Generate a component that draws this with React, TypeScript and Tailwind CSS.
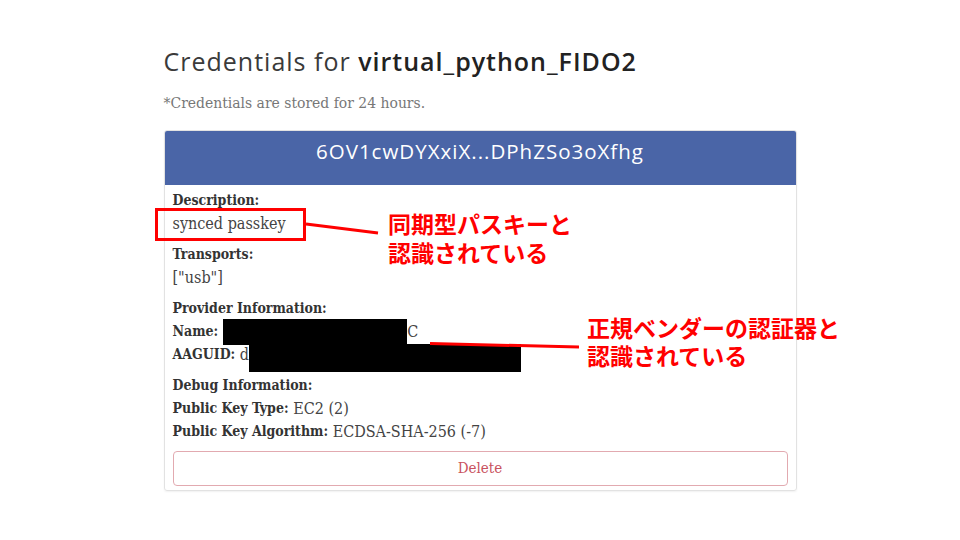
const label = "font-bold text-[#333] font-['DejaVu_Serif_Condensed','DejaVu_Serif',serif] text-[14px]";
const value = "text-[#444] font-['DejaVu_Serif_Condensed','DejaVu_Serif',serif] text-[16px]";

function Row({ k, v }: { k: string; v: string }) {
  return (
    <div className="h-[23px] flex items-center whitespace-nowrap">
      <span className={label}>{k}</span>
      <span className={value}>&nbsp;{v}</span>
    </div>
  );
}

export default function App() {
  return (
    <div className="relative w-[960px] h-[540px] bg-white overflow-hidden">
      <div className="mx-auto w-[633px] pt-[44px]">
        <h1 className="text-[25px] leading-[34px] tracking-[1px] text-[#3a3a3a] font-['Open_Sans','Lato',sans-serif] whitespace-nowrap">
          Credentials for <span className="font-semibold text-[#222]">virtual_python_FIDO2</span>
        </h1>
        <p className="mt-[15px] leading-[20px] text-[15.5px] text-[#777] font-['DejaVu_Serif_Condensed','DejaVu_Serif',serif]">
          *Credentials are stored for 24 hours.
        </p>
        <div className="mt-[17px] border border-[#e2e2e2] rounded-[3px] overflow-hidden shadow-[0_1px_2px_rgba(0,0,0,0.06)]">
          <div className="h-[54px] bg-[#4a65a7] flex justify-center pt-[5px]">
            <span className="text-white text-[20.5px] leading-[30px] tracking-[1px] font-['Open_Sans','Lato',sans-serif]">
              6OV1cwDYXxiX...DPhZSo3oXfhg
            </span>
          </div>
          <div className="px-2 pt-1 pb-1">
            <section className="mb-2">
              <div className="h-[23px] flex items-center">
                <span className={label}>Description:</span>
              </div>
              <div className="h-[23px] flex items-center">
                <span className={value}>synced passkey</span>
              </div>
            </section>
            <section className="mb-2">
              <div className="h-[23px] flex items-center">
                <span className={label}>Transports:</span>
              </div>
              <div className="h-[23px] flex items-center">
                <span className={value}>["usb"]</span>
              </div>
            </section>
            <section className="mb-2">
              <div className="h-[23px] flex items-center">
                <span className={label}>Provider Information:</span>
              </div>
              <div className="h-[23px] flex items-center whitespace-nowrap">
                <span className={label}>Name:</span>
                <span className="ml-[5px] w-[184px] h-[26px] shrink-0 bg-black" />
                <span className={value}>C</span>
              </div>
              <div className="h-[23px] flex items-center whitespace-nowrap">
                <span className={label}>AAGUID:</span>
                <span className={value}>&nbsp;d</span>
                <span className="self-start mt-[1px] w-[272px] h-[28px] shrink-0 bg-black" />
              </div>
            </section>
            <section className="mb-2">
              <div className="h-[23px] flex items-center">
                <span className={label}>Debug Information:</span>
              </div>
              <Row k="Public Key Type:" v="EC2 (2)" />
              <Row k="Public Key Algorithm:" v="ECDSA-SHA-256 (-7)" />
            </section>
            <button className="w-full h-[35px] border border-[#e2aab0] rounded-[4px] bg-white text-[#c9525e] text-[15px] font-['DejaVu_Serif_Condensed','DejaVu_Serif',serif]">
              Delete
            </button>
          </div>
        </div>
      </div>

      {/* annotations */}
      <div className="absolute left-[155px] top-[208px] w-[151px] h-[33px] border-[3px] border-[#ff0000]" />
      <svg className="absolute inset-0 pointer-events-none" width="960" height="540">
        <line x1="306" y1="224" x2="378" y2="233" stroke="#ff0000" strokeWidth="3" />
        <line x1="430" y1="343.5" x2="579" y2="347" stroke="#ff0000" strokeWidth="3" />
      </svg>
      <div className="absolute left-[388px] top-[209px] text-[23px] leading-[29px] font-bold text-[#ff0000] font-['Noto_Sans_CJK_JP',sans-serif]">
        同期型パスキーと
        <br />
        認識されている
      </div>
      <div className="absolute left-[587px] top-[313px] text-[23px] leading-[28px] font-bold text-[#ff0000] font-['Noto_Sans_CJK_JP',sans-serif]">
        正規ベンダーの認証器と
        <br />
        認識されている
      </div>
    </div>
  );
}
